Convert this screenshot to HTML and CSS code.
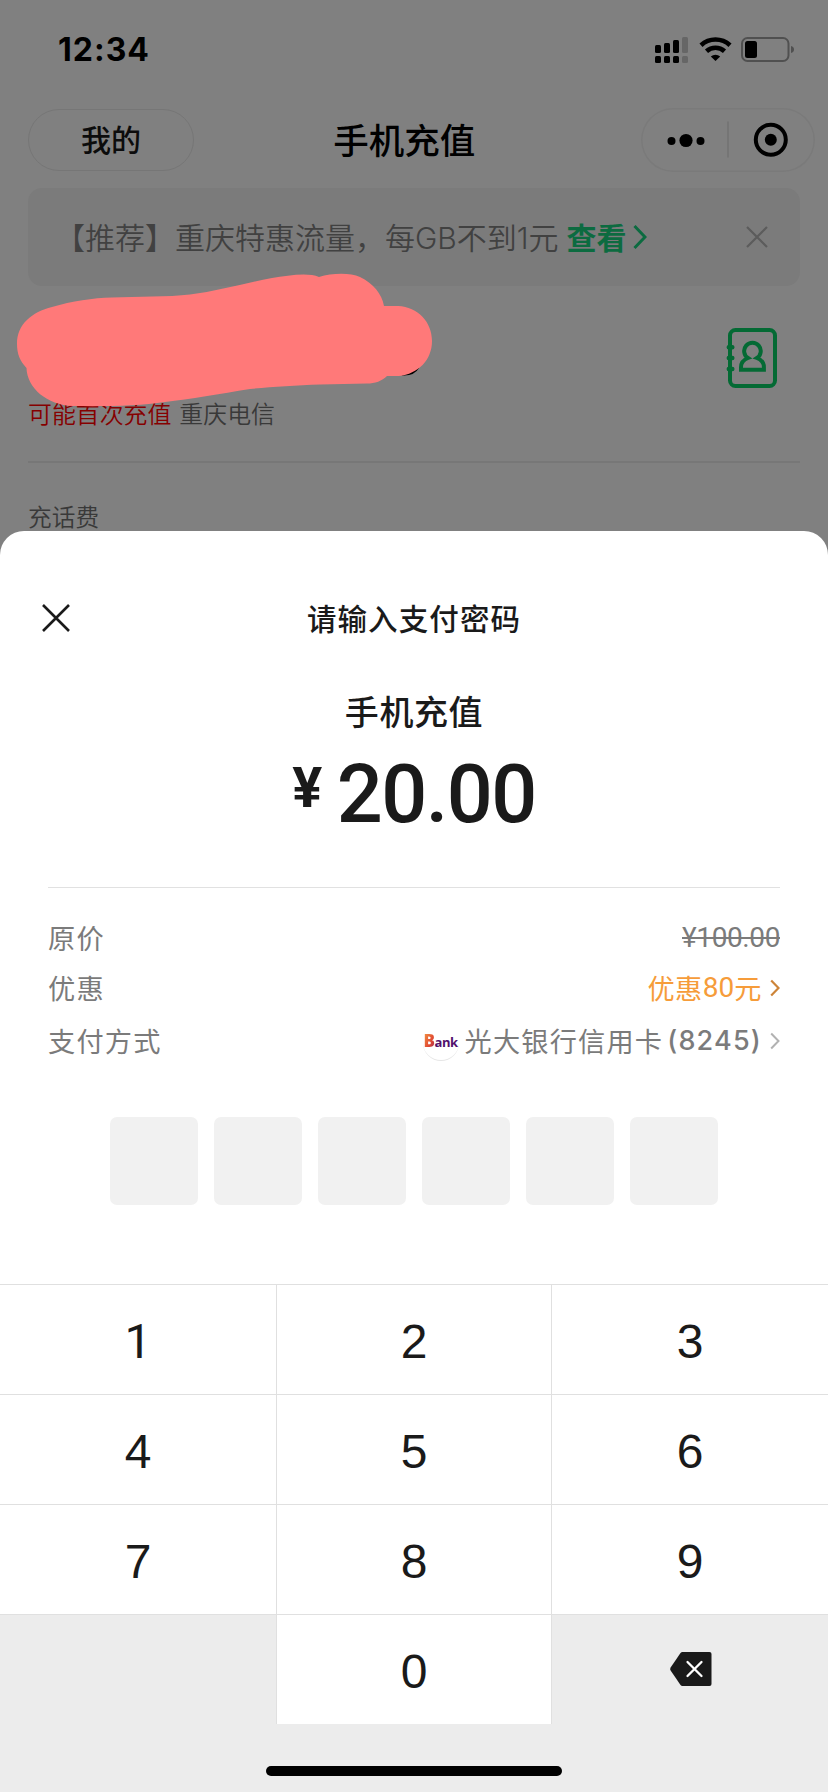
FILE: index.html
```html
<!DOCTYPE html>
<html lang="zh-CN">
<head>
<meta charset="utf-8">
<title>手机充值</title>
<link rel="stylesheet" href="styles.css">
</head>
<body>
<div class="screen">
  <div class="backdrop">
    <div class="status">
      <span class="time">12:34</span>
      <svg class="status-icons" width="140" height="28" viewBox="655 36 140 28">
        <g>
          <rect x="655" y="45" width="6" height="8" rx="1.5"/><rect x="664" y="43" width="6" height="10" rx="1.5"/><rect x="673" y="40" width="6" height="13" rx="1.5"/>
          <rect x="655" y="56" width="6" height="7" rx="1.5"/><rect x="664" y="56" width="6" height="7" rx="1.5"/><rect x="673" y="56" width="6" height="7" rx="1.5"/>
          <g fill="#666"><rect x="682" y="37" width="6" height="16" rx="1.5"/><rect x="682" y="56" width="6" height="7" rx="1.5"/></g>
        </g>
        <g fill="none" stroke="#000" stroke-width="4.6"><path d="M701 45.2a21.5 21.5 0 0 1 29 0"/><path d="M706.5 51.3a13.3 13.3 0 0 1 18 0"/></g>
        <path d="M715.500 61l-4.700-4.500a7 7 0 0 1 9.400 0z"/>
        <rect x="742" y="38" width="46.500" height="23" rx="5.500" fill="none" stroke="#505050" stroke-width="2"/>
        <rect x="745" y="41" width="12" height="17" rx="2.500"/>
        <path d="M791 46q3 .8 3 3.500t-3 3.500z" fill="#505050"/>
      </svg>
    </div>
    <div class="nav">
      <div class="mine">我的</div>
      <div class="nav-title">手机充值</div>
      <div class="capsule">
        <svg width="174" height="64" viewBox="640.500 108 174 64">
          <circle cx="671" cy="141" r="4"/><circle cx="685.500" cy="140.500" r="6.600"/><circle cx="700" cy="141" r="4"/>
          <path d="M727.500 121.500v36" stroke="#6a6a6a"/>
          <circle cx="770.300" cy="139.800" r="15" fill="none" stroke="#000" stroke-width="4"/><circle cx="770.300" cy="139.800" r="6"/>
        </svg>
      </div>
    </div>
    <div class="banner">
      <span class="banner-text">【推荐】重庆特惠流量，每<span class="latin">GB</span>不到<span class="latin">1</span>元</span>
      <span class="look">查看</span>
      <svg class="look-arrow" width="14" height="26" viewBox="0 0 14 26"><path d="M1.500 2L12 13 1.500 24" fill="none" stroke="#0c6b40" stroke-width="3"/></svg>
      <svg class="dismiss" width="22" height="22" viewBox="0 0 22 22"><path d="M1 1l20 20M21 1L1 21" stroke="#5c5c5c" stroke-width="2.200"/></svg>
    </div>
    <div class="phone">
      <div class="carrier"><span class="first">可能首次充值</span><span>重庆电信</span></div>
      <svg class="contacts" width="52" height="62" viewBox="726 327 52 62" fill="none" stroke="#046a34" stroke-width="4">
        <rect x="730" y="330" width="45" height="56" rx="5.500"/>
        <path d="M728.800 347.300h3.500M728.800 358h3.500M728.800 369h3.500" stroke-width="4.500" stroke-linecap="round"/>
        <path d="M741 369.700v-2.500q0-6.500 7-9.200a8.300 8.300 0 1 1 8.900 0q7 2.700 7 9.200v2.500z"/>
      </svg>
    </div>
    <div class="section">充话费</div>
    <svg class="scribble" width="480" height="160" viewBox="0 260 480 160">
      <path d="M402 374Q413 375 418 367" fill="none" stroke="#000" stroke-width="3"/>
      <path fill="#ff7979" d="M17 344C17 324 32 312 52 307C72 301 93 298 112 297.500C138 296.500 168 297 190 294.500C218 291 245 283 272 278C288 275.500 308 272 319 277C332 273 350 272.500 360 277C373 283 382 294 384 306L398 306C418 307 432 322 432 341C432 360 418 374 399 376L387 376C382 381 375 383.500 367 383.500L320 384.500C295 385.500 270 387 250 389C220 394 190 399 165 402C140 406 105 406.500 73 406C47 405 27 388 26.500 368C20 361 17 354 17 344Z"/>
    </svg>
  </div>

  <div class="sheet">
    <div class="sheet-head">
      <svg class="close" width="30" height="30" viewBox="0 0 30 30"><path d="M2 2l26 26M28 2L2 28" stroke="#1a1a1a" stroke-width="2.600"/></svg>
      <div class="sheet-title">请输入支付密码</div>
    </div>
    <div class="item">手机充值</div>
    <div class="amount"><span class="yen">¥</span><span>20.00</span></div>
    <div class="details">
      <div class="row"><span>原价</span><span class="original">¥100.00</span></div>
      <div class="row"><span>优惠</span><span class="value discount">优惠<span class="rb">80</span>元
        <svg class="arrow" width="10" height="18" viewBox="0 0 10 18"><path d="M1.200 1.500L8.500 9l-7.300 7.500" fill="none" stroke="#cd8438" stroke-width="2.200"/></svg></span></div>
      <div class="row pay"><span>支付方式</span><span class="value">
        <span class="bank"><b>B</b>ank</span>光大银行信用卡<span class="tail">(8245)</span>
        <svg class="arrow" width="10" height="18" viewBox="0 0 10 18"><path d="M1.200 1.500L8.500 9l-7.300 7.500" fill="none" stroke="#b2b2b2" stroke-width="2"/></svg></span></div>
    </div>
    <div class="pin"><i></i><i></i><i></i><i></i><i></i><i></i></div>
    <div class="keys">
      <div class="key-one">1</div><div>2</div><div>3</div>
      <div>4</div><div>5</div><div>6</div>
      <div>7</div><div>8</div><div>9</div>
      <div class="blank"></div><div>0</div>
      <div class="blank"><svg width="42" height="34" viewBox="0 0 42 34"><path d="M12.500 0H39.500Q41.500 0 41.500 2V32Q41.500 34 39.500 34H12.500Q11.300 34 10.500 33L.8 18.800Q-.4 17 .8 15.200L10.500 1Q11.300 0 12.500 0Z" fill="#1a1a1a"/><path d="M17.500 10l14 14M31.500 10l-14 14" stroke="#fff" stroke-width="2.300" stroke-linecap="round"/></svg></div>
    </div>
    <div class="home"><div class="bar"></div></div>
  </div>
</div>
</body>
</html>
```
FILE: styles.css
```css
* { box-sizing: border-box; }
body { margin: 0; background: #808080; font-family: "Noto Sans CJK SC", sans-serif; }
svg { display: block; flex: none; }
.screen { width: 828px; height: 1792px; overflow: hidden; display: flex; flex-direction: column; }
.backdrop { position: relative; height: 531px; flex: none; padding: 0 28px; white-space: nowrap; }

.status { height: 108px; padding: 30px 5px 0 30px; display: flex; justify-content: space-between; align-items: flex-start; }
.time { font: 700 32px/40px Inter, sans-serif; letter-spacing: 1px; color: #000; }
.status-icons { margin-top: 6px; }

.nav { height: 80px; margin-right: -14.500px; display: grid; grid-template-columns: 166px 1fr 174px; align-items: start; color: #000; }
.mine { height: 62px; margin-top: 1px; border: 1px solid #767676; border-radius: 31px; text-align: center; font-size: 30px; font-weight: 500; line-height: 56px; color: #0c0c0c; }
.nav-title { margin-left: -26px; text-align: center; font-size: 35.500px; font-weight: 500; line-height: 62px; }
.capsule { height: 64px; border-radius: 32px; box-shadow: inset 0 0 0 1.500px #7a7a7a; }

.banner { height: 98px; padding: 0 32px 0 27px; border-radius: 14px; background: #7b7b7b; display: flex; align-items: center; font-size: 30px; line-height: 40px; color: #414141; }
.banner-text { font-weight: 350; }
.latin { font-family: Inter, sans-serif; font-weight: 300; }
.look { margin: -2px 0 0 8px; font-weight: 700; color: #0c6b40; }
.look-arrow { margin-left: 6px; }
.dismiss { margin-left: auto; }

.phone { height: 177px; border-bottom: 2px solid #777; display: flex; justify-content: space-between; align-items: flex-start; }
.contacts { margin: 41px 22px 0 0; }
.carrier { padding-top: 110px; display: flex; gap: 8px; font-size: 23.900px; font-weight: 350; line-height: 34px; color: #393939; }
.first { color: #860000; }
.section { padding-top: 39px; font-size: 23.700px; font-weight: 350; line-height: 28px; color: #393939; }
.scribble { position: absolute; left: 0; top: 260px; }

.sheet { flex: 1; background: #fff; border-radius: 24px 24px 0 0; overflow: hidden; color: #1a1a1a; }
.sheet-head { height: 132px; padding: 66px 41px 0; display: grid; grid-template-columns: 30px 1fr 30px; }
.close { margin-top: 6px; }
.sheet-title { text-align: center; font-size: 29.500px; font-weight: 500; letter-spacing: 1.100px; line-height: 40px; }
.item { margin-top: 23px; text-align: center; font-size: 34px; font-weight: 500; letter-spacing: .6px; line-height: 50px; }
.amount { height: 96px; margin-top: 11px; display: flex; justify-content: center; align-items: flex-start; font: 500 81px/96px Roboto, sans-serif; letter-spacing: -1.500px; }
.yen { margin-right: 16px; font-size: 56px; line-height: 82px; font-weight: 700; }
.details { margin: 44px 48px 0; padding-top: 24px; border-top: 1px solid #e1e1e1; font-size: 27.200px; letter-spacing: 1.200px; color: #7b7b7b; }
.row { height: 50px; display: flex; align-items: center; justify-content: space-between; line-height: 50px; }
.pay { height: 56px; }
.value { display: flex; align-items: center; }
.original { margin-top: 2px; font-family: Roboto, sans-serif; font-size: 28px; letter-spacing: -.4px; text-decoration: line-through; text-decoration-thickness: 2px; }
.discount { color: #f69c3a; letter-spacing: .5px; }
.rb { margin-top: 1px; font-family: Roboto, sans-serif; font-size: 28px; letter-spacing: 0; }
.arrow { margin: 1px 0 0 8px; }
.tail { margin: 1px 0 0 4px; font: 500 27px/50px Inter, sans-serif; letter-spacing: 1.200px; }
.bank { width: 36px; height: 38px; margin: 3px 6px 0 0; border-radius: 19px; border-bottom: 1px solid #e6e6e6; font: 700 13px/36px "Open Sans", sans-serif; letter-spacing: -.5px; text-align: center; color: #52106c; }
.bank b { font-size: 17px; background: linear-gradient(120deg, #f5a044, #e04832 60%, #8c2360); -webkit-background-clip: text; color: transparent; }
.pin { margin-top: 49px; display: flex; justify-content: center; gap: 16px; }
.pin i { width: 88px; height: 88px; border-radius: 7px; background: #f1f1f1; }
.keys { margin-top: 79px; border-top: 1px solid #e0e0e0; display: grid; grid-template-columns: 277px 275px 276px; grid-template-rows: 110px 110px 110px 109px; font: 48px/114px "Liberation Sans", Arial, sans-serif; text-align: center; }
.keys div { border-right: 1px solid #e0e0e0; border-bottom: 1px solid #e0e0e0; }
.keys div:nth-child(3n) { border-right: 0; }
.keys div:nth-child(n+10) { border-bottom: 0; }
.keys .key-one { font-family: Roboto, sans-serif; }
.keys .blank { background: #ececec; display: flex; align-items: center; justify-content: center; padding: 0 0 2px 1px; }
.home { height: 68px; background: #ececec; padding-top: 42px; }
.bar { width: 296px; height: 10px; margin: 0 auto; border-radius: 5px; background: #000; }
```
